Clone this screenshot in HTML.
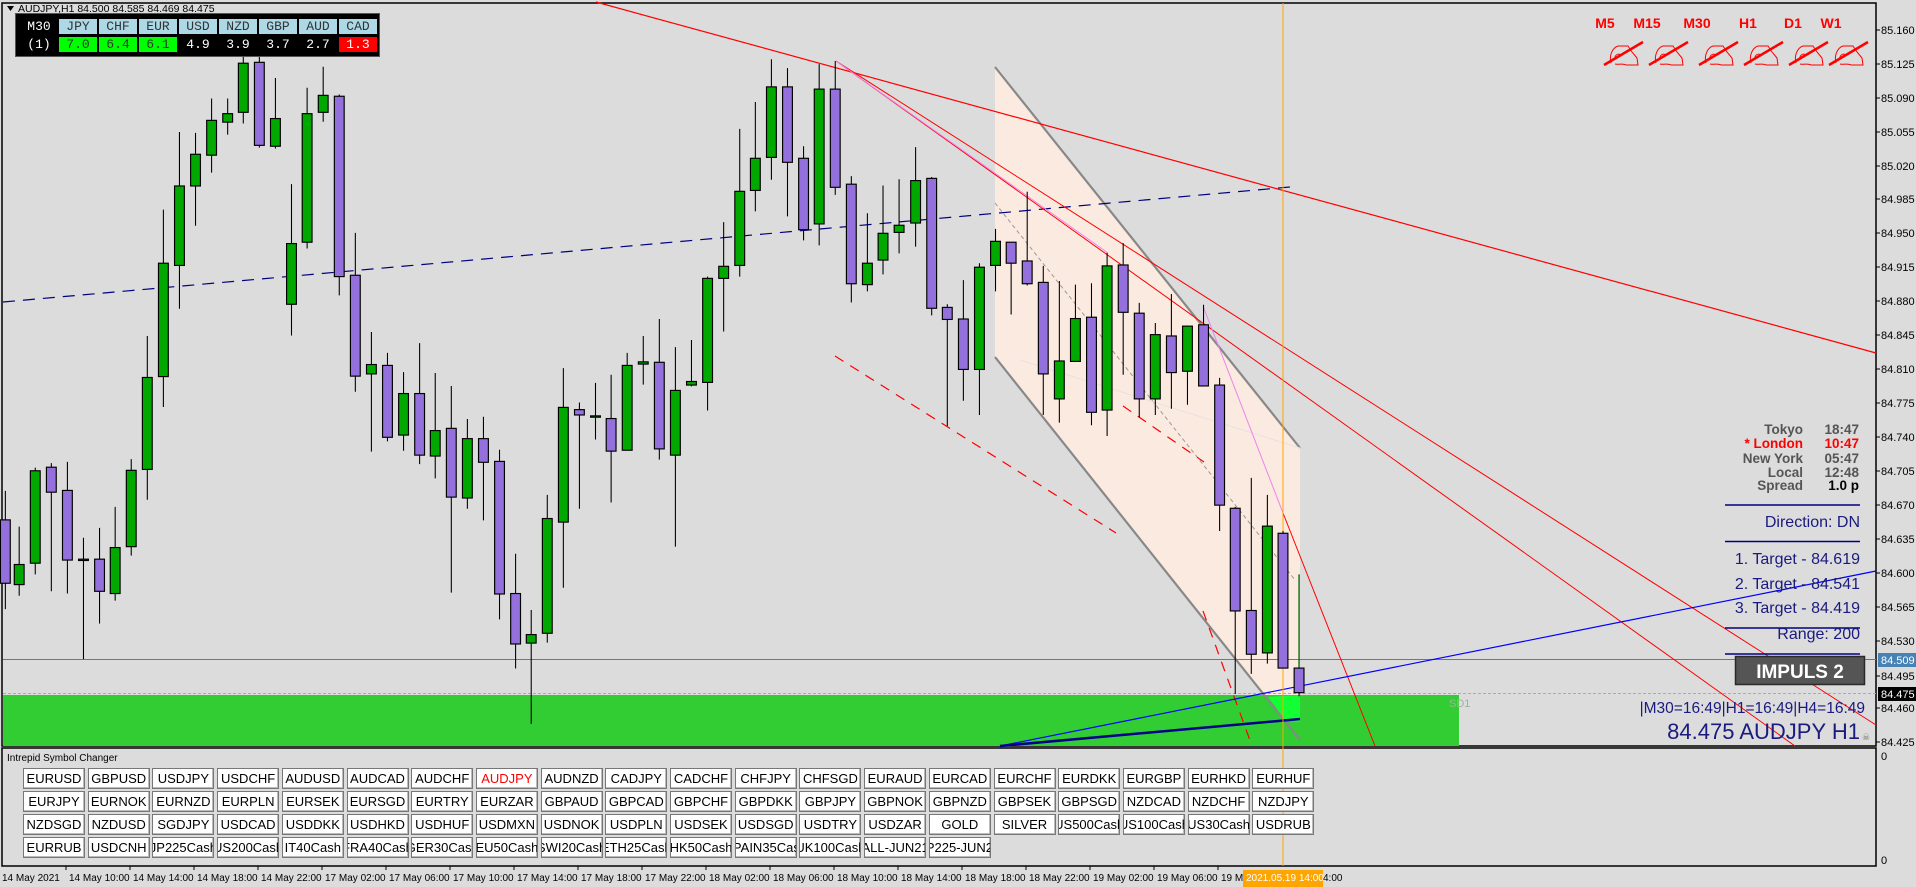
<!DOCTYPE html>
<html><head><meta charset="utf-8">
<style>
*{margin:0;padding:0;box-sizing:border-box}
body{width:1916px;height:887px;background:#dcdcdc;position:relative;overflow:hidden;font-family:"Liberation Sans",Arial,sans-serif}
svg{position:absolute;left:0;top:0}
#tbl{position:absolute;left:15px;top:13px;width:365px;height:44px;background:#000;border:1px solid #555;font-family:"Liberation Mono",monospace;font-size:13px}
#tbl div{position:absolute;height:15px;line-height:15px;text-align:center;width:38px}
.h{background:#add8e6;color:#333;top:5px}
.v{top:23px;color:#fff}
#btns{position:absolute;left:23px;top:768px}
.b{position:absolute;width:62px;height:21px;background:#fff;border:1px solid #777;box-shadow:inset -1px -1px 0 #bbb;font-size:13px;color:#000;display:flex;justify-content:center;align-items:center;overflow:hidden;white-space:nowrap}
</style></head><body>
<svg width="1916" height="887" viewBox="0 0 1916 887">
<rect x="2" y="3" width="1874" height="743" fill="#dcdcdc" stroke="#000" stroke-width="1.5"/>
<rect x="2" y="748" width="1874" height="118" fill="#dcdcdc" stroke="#000" stroke-width="1.5"/>
<polygon points="995,67 1300,448 1300,740 995,357" fill="#fbeadf"/>
<rect x="3" y="695" width="1456" height="51" fill="#32cd32"/>
<text x="1449" y="707" font-size="11" fill="#9ab49a">SD1</text>
<line x1="995" y1="67" x2="1300" y2="448" stroke="#888" stroke-width="2.2"/>
<line x1="995" y1="357" x2="1300" y2="740" stroke="#888" stroke-width="2.2"/>
<line x1="995" y1="203" x2="1295" y2="580" stroke="#999" stroke-width="1" stroke-dasharray="4,3"/>
<line x1="1020" y1="360" x2="1300" y2="448" stroke="#e8e0e0" stroke-width="1"/>
<line x1="3" y1="659.5" x2="1876" y2="659.5" stroke="#4682b4" stroke-width="1"/>
<line x1="3" y1="693.5" x2="1876" y2="693.5" stroke="#aaa" stroke-width="1" stroke-dasharray="3,2"/>
<line x1="3" y1="302" x2="1290" y2="187" stroke="#000080" stroke-width="1.2" stroke-dasharray="12,8"/>
<line x1="596" y1="2" x2="1876" y2="353" stroke="#f00" stroke-width="1.2"/>
<line x1="836" y1="61" x2="1876" y2="725" stroke="#f00" stroke-width="1"/>
<line x1="836" y1="61" x2="1795" y2="746" stroke="#f00" stroke-width="1"/>
<line x1="1283" y1="513" x2="1375" y2="746" stroke="#f00" stroke-width="1"/>
<line x1="836" y1="61" x2="1108" y2="253" stroke="#ee82ee" stroke-width="1"/>
<line x1="1203" y1="306" x2="1283" y2="513" stroke="#ee82ee" stroke-width="1"/>
<line x1="835" y1="356" x2="1116" y2="533" stroke="#f00" stroke-width="1.2" stroke-dasharray="10,8"/>
<line x1="1123" y1="406" x2="1204" y2="462" stroke="#f00" stroke-width="1.2" stroke-dasharray="10,8"/>
<line x1="1203" y1="611" x2="1252" y2="746" stroke="#f00" stroke-width="1.2" stroke-dasharray="10,8"/>
<polygon points="1268,697 1300,695 1300,722 1286,721" fill="#11ff33"/>
<line x1="1000" y1="746" x2="1876" y2="571" stroke="#0000ff" stroke-width="1.2"/>
<line x1="1000" y1="746" x2="1300" y2="719" stroke="#00008b" stroke-width="2.5"/>
<line x1="1283" y1="3" x2="1283" y2="866" stroke="#ffa500" stroke-width="1"/>
<g transform="translate(0,40) scale(0.4464)" stroke="#000">
<path stroke-width="2.4" fill="none" d="M12 1010V1275M43 1090V1245M79 958V1197M115 948V1235M151 945V1240M187 1115V1387M223 1093V1307M258 1046V1256M294 939V1155M330 663V1030M366 380V822M402 206V602M438 208V416M474 131V297M510 131V212M545 20V187M581 20V241M617 85V243M653 323V662M688 107V467M724 60V183M760 122V572M796 432V788M832 654V922M868 701V899M904 744V920M940 679V950M975 746V982M1011 775V1238M1047 849V1050M1083 844V1076M1119 918V1298M1155 1151V1408M1190 1277V1532M1226 1019V1350M1262 735V1227M1298 812V1050M1334 768V895M1369 750V1036M1405 701V919M1441 663V772M1477 625V940M1513 688V1135M1549 672V776"/>
<g stroke-width="2.6">
<rect x="1" y="1075" width="22" height="142" fill="#9370db"/>
<rect x="32" y="1175" width="22" height="45" fill="#00a800"/>
<rect x="68" y="965" width="22" height="207" fill="#00a800"/>
<rect x="104" y="957" width="22" height="56" fill="#9370db"/>
<rect x="140" y="1009" width="22" height="156" fill="#9370db"/>
<rect x="176" y="1163" width="22" height="3" fill="#00a800"/>
<rect x="212" y="1163" width="22" height="72" fill="#9370db"/>
<rect x="247" y="1137" width="22" height="103" fill="#00a800"/>
<rect x="283" y="964" width="22" height="171" fill="#00a800"/>
<rect x="319" y="756" width="22" height="206" fill="#00a800"/>
<rect x="355" y="500" width="22" height="254" fill="#00a800"/>
<rect x="391" y="327" width="22" height="178" fill="#00a800"/>
<rect x="427" y="256" width="22" height="71" fill="#00a800"/>
<rect x="463" y="180" width="22" height="78" fill="#00a800"/>
<rect x="499" y="165" width="22" height="19" fill="#00a800"/>
<rect x="534" y="52" width="22" height="110" fill="#00a800"/>
<rect x="570" y="50" width="22" height="186" fill="#9370db"/>
<rect x="606" y="176" width="22" height="62" fill="#00a800"/>
<rect x="642" y="456" width="22" height="136" fill="#00a800"/>
<rect x="677" y="165" width="22" height="288" fill="#00a800"/>
<rect x="713" y="124" width="22" height="38" fill="#00a800"/>
<rect x="749" y="126" width="22" height="404" fill="#9370db"/>
<rect x="785" y="527" width="22" height="226" fill="#9370db"/>
<rect x="821" y="727" width="22" height="21" fill="#00a800"/>
<rect x="857" y="729" width="22" height="161" fill="#9370db"/>
<rect x="893" y="792" width="22" height="93" fill="#00a800"/>
<rect x="929" y="792" width="22" height="138" fill="#9370db"/>
<rect x="964" y="875" width="22" height="57" fill="#00a800"/>
<rect x="1000" y="870" width="22" height="154" fill="#9370db"/>
<rect x="1036" y="893" width="22" height="133" fill="#00a800"/>
<rect x="1072" y="893" width="22" height="53" fill="#9370db"/>
<rect x="1108" y="944" width="22" height="297" fill="#9370db"/>
<rect x="1144" y="1240" width="22" height="113" fill="#9370db"/>
<rect x="1179" y="1332" width="22" height="19" fill="#00a800"/>
<rect x="1215" y="1072" width="22" height="257" fill="#00a800"/>
<rect x="1251" y="823" width="22" height="257" fill="#00a800"/>
<rect x="1287" y="828" width="22" height="12" fill="#9370db"/>
<rect x="1323" y="842" width="22" height="3" fill="#00a800"/>
<rect x="1358" y="848" width="22" height="73" fill="#9370db"/>
<rect x="1394" y="729" width="22" height="190" fill="#00a800"/>
<rect x="1430" y="721" width="22" height="5" fill="#00a800"/>
<rect x="1466" y="722" width="22" height="194" fill="#9370db"/>
<rect x="1502" y="785" width="22" height="145" fill="#00a800"/>
<rect x="1538" y="765" width="22" height="8" fill="#00a800"/>
</g></g>
<g transform="translate(650,40) scale(0.4464)" stroke="#000">
<path stroke-width="2.4" fill="none" d="M129 530V830M165 408V653M201 199V530M236 139V384M272 43V313M308 63V395M344 238V449M379 54V460M415 47V347M451 305V588M487 388V563M522 326V525M558 312V478M595 240V463M631 307V617M666 592V865M702 538V808M738 500V840M774 423V563M809 453V615M845 340V550M881 506V840M917 540V857M953 548V720M989 545V863M1024 477V887M1060 455V750M1096 589V845M1132 634V840M1168 569V826M1204 640V817M1240 593V775M1276 757V1100M1311 1046V1465M1347 981V1420M1383 1019V1397M1418 1100V1407M1454 1407V1470"/>
<path d="M1454 1197V1407" stroke="#006400" stroke-width="3"/>
<g stroke-width="2.6">
<rect x="118" y="534" width="22" height="233" fill="#00a800"/>
<rect x="154" y="507" width="22" height="27" fill="#00a800"/>
<rect x="190" y="339" width="22" height="166" fill="#00a800"/>
<rect x="225" y="265" width="22" height="72" fill="#00a800"/>
<rect x="261" y="105" width="22" height="158" fill="#00a800"/>
<rect x="297" y="105" width="22" height="169" fill="#9370db"/>
<rect x="333" y="265" width="22" height="160" fill="#9370db"/>
<rect x="368" y="110" width="22" height="302" fill="#00a800"/>
<rect x="404" y="110" width="22" height="220" fill="#9370db"/>
<rect x="440" y="323" width="22" height="223" fill="#9370db"/>
<rect x="476" y="500" width="22" height="48" fill="#00a800"/>
<rect x="511" y="433" width="22" height="60" fill="#00a800"/>
<rect x="547" y="415" width="22" height="16" fill="#00a800"/>
<rect x="584" y="315" width="22" height="95" fill="#00a800"/>
<rect x="620" y="310" width="22" height="291" fill="#9370db"/>
<rect x="655" y="599" width="22" height="27" fill="#9370db"/>
<rect x="691" y="625" width="22" height="113" fill="#9370db"/>
<rect x="727" y="509" width="22" height="229" fill="#00a800"/>
<rect x="763" y="451" width="22" height="54" fill="#00a800"/>
<rect x="798" y="453" width="22" height="47" fill="#9370db"/>
<rect x="834" y="495" width="22" height="51" fill="#9370db"/>
<rect x="870" y="543" width="22" height="205" fill="#9370db"/>
<rect x="906" y="719" width="22" height="85" fill="#00a800"/>
<rect x="942" y="624" width="22" height="96" fill="#00a800"/>
<rect x="978" y="621" width="22" height="213" fill="#9370db"/>
<rect x="1013" y="506" width="22" height="323" fill="#00a800"/>
<rect x="1049" y="504" width="22" height="106" fill="#9370db"/>
<rect x="1085" y="612" width="22" height="192" fill="#9370db"/>
<rect x="1121" y="660" width="22" height="144" fill="#00a800"/>
<rect x="1157" y="663" width="22" height="82" fill="#9370db"/>
<rect x="1193" y="641" width="22" height="101" fill="#00a800"/>
<rect x="1229" y="638" width="22" height="137" fill="#9370db"/>
<rect x="1265" y="773" width="22" height="269" fill="#9370db"/>
<rect x="1300" y="1049" width="22" height="230" fill="#9370db"/>
<rect x="1336" y="1278" width="22" height="98" fill="#9370db"/>
<rect x="1372" y="1089" width="22" height="284" fill="#00a800"/>
<rect x="1407" y="1105" width="22" height="302" fill="#9370db"/>
<rect x="1443" y="1407" width="22" height="55" fill="#9370db"/>
</g></g>
<path d="M7 6 L14 6 L10.5 11 Z" fill="#000"/>
<text x="18" y="12" font-size="10.5" fill="#000">AUDJPY,H1  84.500 84.585 84.469 84.475</text>
<g font-family="'Liberation Sans Narrow','Liberation Sans',sans-serif" font-weight="bold" font-size="14" fill="#f00" text-anchor="middle">
<text x="1605" y="28">M5</text><text x="1647" y="28">M15</text><text x="1697" y="28">M30</text><text x="1748" y="28">H1</text><text x="1793" y="28">D1</text><text x="1831" y="28">W1</text>
</g>
<defs><g id="hand"><path d="M-12,11 C-14,4 -11,-4 -5,-6 L5,-6 L9,0 L14,6 L15,13 L3,13 C0,11 -4,13 -8,12" fill="none" stroke="#f00" stroke-width="1"/><path d="M-8,8 C-9,3 -5,1 -2,3" fill="none" stroke="#f00" stroke-width="1"/><line x1="-19" y1="13" x2="20" y2="-10" stroke="#f00" stroke-width="2.5"/></g></defs>
<use href="#hand" x="1623" y="52"/><use href="#hand" x="1668" y="52"/><use href="#hand" x="1718" y="52"/><use href="#hand" x="1763" y="52"/><use href="#hand" x="1808" y="52"/><use href="#hand" x="1848" y="52"/>
<g font-size="11" fill="#000">
<text x="1881" y="34">85.160</text><text x="1881" y="68">85.125</text><text x="1881" y="102">85.090</text><text x="1881" y="136">85.055</text><text x="1881" y="170">85.020</text><text x="1881" y="203">84.985</text><text x="1881" y="237">84.950</text><text x="1881" y="271">84.915</text><text x="1881" y="305">84.880</text><text x="1881" y="339">84.845</text><text x="1881" y="373">84.810</text><text x="1881" y="407">84.775</text><text x="1881" y="441">84.740</text><text x="1881" y="475">84.705</text><text x="1881" y="509">84.670</text><text x="1881" y="543">84.635</text><text x="1881" y="577">84.600</text><text x="1881" y="611">84.565</text><text x="1881" y="645">84.530</text><text x="1881" y="712">84.460</text><text x="1881" y="746">84.425</text><text x="1881" y="680">84.495</text>
</g>
<g stroke="#000"><path d="M1876 30h4M1876 64h4M1876 98h4M1876 132h4M1876 166h4M1876 199h4M1876 233h4M1876 267h4M1876 301h4M1876 335h4M1876 369h4M1876 403h4M1876 437h4M1876 471h4M1876 505h4M1876 539h4M1876 573h4M1876 607h4M1876 641h4M1876 676h4M1876 708h4M1876 742h4"/></g>
<rect x="1878" y="653" width="38" height="14" fill="#4682b4"/><text x="1881" y="664" font-size="11" fill="#fff">84.509</text>
<rect x="1878" y="687" width="38" height="14" fill="#000"/><text x="1881" y="698" font-size="11" fill="#fff">84.475</text>
<text x="1881" y="760" font-size="11">0</text><text x="1881" y="864" font-size="11">0</text>
<g font-weight="bold" font-size="13.5" text-anchor="end" fill="#555">
<text x="1803" y="434">Tokyo</text><text x="1859" y="434">18:47</text>
<text x="1803" y="448" fill="#f00">* London</text><text x="1859" y="448" fill="#f00">10:47</text>
<text x="1803" y="463">New York</text><text x="1859" y="463">05:47</text>
<text x="1803" y="477">Local</text><text x="1859" y="477">12:48</text>
<text x="1803" y="490">Spread</text><text x="1859" y="490" fill="#000">1.0 p</text>
</g>
<g stroke="#000080" stroke-width="1.5"><path d="M1725 505H1860M1725 541.5H1860M1725 628H1860M1725 654H1860"/></g>
<g font-size="16" fill="#1a1a80" text-anchor="end">
<text x="1860" y="527">Direction: DN</text>
<text x="1860" y="564">1. Target - 84.619</text>
<text x="1860" y="589">2. Target - 84.541</text>
<text x="1860" y="613">3. Target - 84.419</text>
<text x="1860" y="639">Range: 200</text>
<text x="1865" y="713" font-size="15.5">|M30=16:49|H1=16:49|H4=16:49</text>
<text x="1860" y="739" font-size="22">84.475 AUDJPY H1</text>
</g>
<rect x="1735.5" y="656.5" width="129" height="28" fill="#555" stroke="#2a2a2a" stroke-width="1.5"/>
<text x="1800" y="678" font-size="19" font-weight="bold" fill="#fff" text-anchor="middle">IMPULS 2</text>
<text x="1862" y="740" font-size="9" fill="#777">☠</text>
<text x="7" y="761" font-size="10" fill="#000">Intrepid Symbol Changer</text>
<g font-size="10" fill="#000">
<text x="2" y="881">14 May 2021</text><text x="69" y="881">14 May 10:00</text><text x="133" y="881">14 May 14:00</text><text x="197" y="881">14 May 18:00</text><text x="261" y="881">14 May 22:00</text><text x="325" y="881">17 May 02:00</text><text x="389" y="881">17 May 06:00</text><text x="453" y="881">17 May 10:00</text><text x="517" y="881">17 May 14:00</text><text x="581" y="881">17 May 18:00</text><text x="645" y="881">17 May 22:00</text><text x="709" y="881">18 May 02:00</text><text x="773" y="881">18 May 06:00</text><text x="837" y="881">18 May 10:00</text><text x="901" y="881">18 May 14:00</text><text x="965" y="881">18 May 18:00</text><text x="1029" y="881">18 May 22:00</text><text x="1093" y="881">19 May 02:00</text><text x="1157" y="881">19 May 06:00</text><text x="1221" y="881">19 May 10:00</text>
</g>
<g stroke="#000"><path d="M66 866v4M130 866v4M194 866v4M258 866v4M322 866v4M386 866v4M450 866v4M514 866v4M578 866v4M642 866v4M706 866v4M770 866v4M834 866v4M898 866v4M962 866v4M1026 866v4M1090 866v4M1154 866v4M1218 866v4"/></g>
<rect x="1243" y="870" width="80" height="17" fill="#ffa500"/>
<text x="1246" y="881" font-size="10" fill="#fff">2021.05.19 14:00</text>
<text x="1323" y="881" font-size="10" fill="#000">4:00</text>
</svg>

<div id="tbl">
<div style="left:8px;top:5px;color:#fff;width:30px">M30</div>
<div style="left:8px;top:23px;color:#fff;width:30px">(1)</div>
<div class="h" style="left:43px">JPY</div><div class="h" style="left:83px">CHF</div><div class="h" style="left:123px">EUR</div><div class="h" style="left:163px">USD</div><div class="h" style="left:203px">NZD</div><div class="h" style="left:243px">GBP</div><div class="h" style="left:283px">AUD</div><div class="h" style="left:323px">CAD</div>
<div class="v" style="left:43px;background:#00ff00;color:#333">7.0</div><div class="v" style="left:83px;background:#00ff00;color:#333">6.4</div><div class="v" style="left:123px;background:#00ff00;color:#333">6.1</div><div class="v" style="left:163px">4.9</div><div class="v" style="left:203px">3.9</div><div class="v" style="left:243px">3.7</div><div class="v" style="left:283px">2.7</div><div class="v" style="left:323px;background:#f00">1.3</div>
</div>

<div id="btns">
<div class="b" style="left:0px;top:0">EURUSD</div><div class="b" style="left:64.7px;top:0">GBPUSD</div><div class="b" style="left:129.4px;top:0">USDJPY</div><div class="b" style="left:194.1px;top:0">USDCHF</div><div class="b" style="left:258.8px;top:0">AUDUSD</div><div class="b" style="left:323.5px;top:0">AUDCAD</div><div class="b" style="left:388.2px;top:0">AUDCHF</div><div class="b" style="left:452.9px;top:0;color:#f00">AUDJPY</div><div class="b" style="left:517.6px;top:0">AUDNZD</div><div class="b" style="left:582.3px;top:0">CADJPY</div><div class="b" style="left:647px;top:0">CADCHF</div><div class="b" style="left:711.7px;top:0">CHFJPY</div><div class="b" style="left:776.4px;top:0">CHFSGD</div><div class="b" style="left:841.1px;top:0">EURAUD</div><div class="b" style="left:905.8px;top:0">EURCAD</div><div class="b" style="left:970.5px;top:0">EURCHF</div><div class="b" style="left:1035.2px;top:0">EURDKK</div><div class="b" style="left:1099.9px;top:0">EURGBP</div><div class="b" style="left:1164.6px;top:0">EURHKD</div><div class="b" style="left:1229.3px;top:0">EURHUF</div>
<div class="b" style="left:0px;top:23px">EURJPY</div><div class="b" style="left:64.7px;top:23px">EURNOK</div><div class="b" style="left:129.4px;top:23px">EURNZD</div><div class="b" style="left:194.1px;top:23px">EURPLN</div><div class="b" style="left:258.8px;top:23px">EURSEK</div><div class="b" style="left:323.5px;top:23px">EURSGD</div><div class="b" style="left:388.2px;top:23px">EURTRY</div><div class="b" style="left:452.9px;top:23px">EURZAR</div><div class="b" style="left:517.6px;top:23px">GBPAUD</div><div class="b" style="left:582.3px;top:23px">GBPCAD</div><div class="b" style="left:647px;top:23px">GBPCHF</div><div class="b" style="left:711.7px;top:23px">GBPDKK</div><div class="b" style="left:776.4px;top:23px">GBPJPY</div><div class="b" style="left:841.1px;top:23px">GBPNOK</div><div class="b" style="left:905.8px;top:23px">GBPNZD</div><div class="b" style="left:970.5px;top:23px">GBPSEK</div><div class="b" style="left:1035.2px;top:23px">GBPSGD</div><div class="b" style="left:1099.9px;top:23px">NZDCAD</div><div class="b" style="left:1164.6px;top:23px">NZDCHF</div><div class="b" style="left:1229.3px;top:23px">NZDJPY</div>
<div class="b" style="left:0px;top:46px">NZDSGD</div><div class="b" style="left:64.7px;top:46px">NZDUSD</div><div class="b" style="left:129.4px;top:46px">SGDJPY</div><div class="b" style="left:194.1px;top:46px">USDCAD</div><div class="b" style="left:258.8px;top:46px">USDDKK</div><div class="b" style="left:323.5px;top:46px">USDHKD</div><div class="b" style="left:388.2px;top:46px">USDHUF</div><div class="b" style="left:452.9px;top:46px">USDMXN</div><div class="b" style="left:517.6px;top:46px">USDNOK</div><div class="b" style="left:582.3px;top:46px">USDPLN</div><div class="b" style="left:647px;top:46px">USDSEK</div><div class="b" style="left:711.7px;top:46px">USDSGD</div><div class="b" style="left:776.4px;top:46px">USDTRY</div><div class="b" style="left:841.1px;top:46px">USDZAR</div><div class="b" style="left:905.8px;top:46px">GOLD</div><div class="b" style="left:970.5px;top:46px">SILVER</div><div class="b" style="left:1035.2px;top:46px">US500Cash</div><div class="b" style="left:1099.9px;top:46px">US100Cash</div><div class="b" style="left:1164.6px;top:46px">US30Cash</div><div class="b" style="left:1229.3px;top:46px">USDRUB</div>
<div class="b" style="left:0px;top:69px">EURRUB</div><div class="b" style="left:64.7px;top:69px">USDCNH</div><div class="b" style="left:129.4px;top:69px">JP225Cash</div><div class="b" style="left:194.1px;top:69px">US200Cash</div><div class="b" style="left:258.8px;top:69px">IT40Cash</div><div class="b" style="left:323.5px;top:69px">FRA40Cash</div><div class="b" style="left:388.2px;top:69px">GER30Cash</div><div class="b" style="left:452.9px;top:69px">EU50Cash</div><div class="b" style="left:517.6px;top:69px">SWI20Cash</div><div class="b" style="left:582.3px;top:69px">ETH25Cash</div><div class="b" style="left:647px;top:69px">HK50Cash</div><div class="b" style="left:711.7px;top:69px">SPAIN35Cash</div><div class="b" style="left:776.4px;top:69px">UK100Cash</div><div class="b" style="left:841.1px;top:69px">ALL-JUN21</div><div class="b" style="left:905.8px;top:69px">JP225-JUN21</div>
</div>
</body></html>
